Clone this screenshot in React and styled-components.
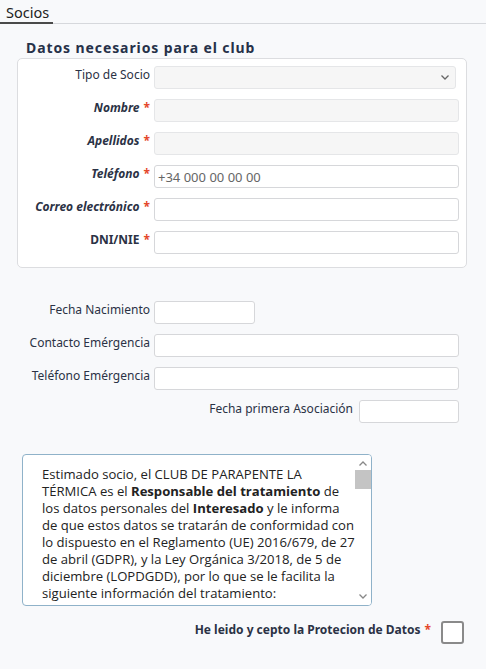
import React from 'react';
import styled, { createGlobalStyle } from 'styled-components';

const Global = createGlobalStyle`
  html, body {
    margin: 0;
    padding: 0;
    background: #f8f9fb;
    font-family: 'Noto Sans', 'Open Sans', sans-serif;
    color: #2b3245;
  }
  * { box-sizing: border-box; }
`;

const Page = styled.div`
  width: 486px;
  min-height: 669px;
`;

const TabBar = styled.div`
  display: flex;
  border-bottom: 1px solid #d6d8dc;
  height: 24px;
`;

const Tab = styled.div`
  padding: 3px 5px 0 6px;
  width: 53px;
  font-size: 14.5px;
  line-height: 19px;
  color: #222;
  border-bottom: 2px solid #4a4a4a;
  margin-bottom: -1px;
`;

const Legend = styled.h3`
  margin: 15px 0 0 26px;
  font-size: 14px;
  font-weight: 700;
  letter-spacing: 0.9px;
  color: #263149;
  line-height: 18px;
`;

const Box = styled.div`
  margin: 1px 19px 0 17px;
  background: #fff;
  border: 1px solid #dcdde0;
  border-radius: 5px;
  padding: 7px 7px 13px 0;
  display: flex;
  flex-direction: column;
  gap: 10px;
`;

const Section = styled.div`
  margin: 33px 27px 0 17px;
  display: flex;
  flex-direction: column;
  gap: 10px;
  padding-left: 1px;
`;

const Row = styled.div`
  display: flex;
  align-items: center;
  justify-content: ${p => (p.$end ? 'flex-end' : 'flex-start')};
  gap: ${p => (p.$end ? '6px' : '4px')};
  height: 23px;
`;

const Label = styled.label`
  width: ${p => (p.$auto ? 'auto' : '132px')};
  text-align: right;
  font-size: 12px;
  color: #2b3245;
  font-weight: ${p => (p.$req ? 700 : 400)};
  font-style: ${p => (p.$italic ? 'italic' : 'normal')};
  white-space: nowrap;
  padding-bottom: 6px;
`;

const Star = styled.span`
  color: #e4472a;
  font-style: normal;
  font-weight: 700;
  margin-left: 4px;
`;

const Input = styled.input`
  height: 23px;
  width: ${p => p.$w || 'auto'};
  flex: ${p => (p.$w ? '0 0 auto' : '1')};
  border: 1px solid ${p => (p.disabled ? '#e5e6e8' : '#d6d7da')};
  border-radius: 3px;
  background: ${p => (p.disabled ? '#f6f6f6' : '#fff')};
  font-family: 'Noto Sans', sans-serif;
  font-size: 13px;
  padding: 0 3px;
  color: #333;
  &::placeholder { color: #666; }
`;

const Select = styled.div`
  flex: 1;
  margin-right: 3px;
  height: 23px;
  border: 1px solid #e5e6e8;
  border-radius: 3px;
  background: #f6f6f6;
  display: flex;
  align-items: center;
  justify-content: flex-end;
  padding-right: 5px;
`;

const Terms = styled.div`
  margin: 31px 0 0 22px;
  width: 350px;
  height: 152px;
  border: 1px solid #8fb2c9;
  border-radius: 4px;
  background: #fff;
  display: flex;
  overflow: hidden;
`;

const TermsText = styled.div`
  flex: 1;
  overflow: hidden;
  white-space: nowrap;
  padding: 11px 0 0 19px;
  font-family: 'Open Sans', 'Noto Sans', sans-serif;
  font-size: 13.1px;
  line-height: 17px;
  color: #222;
  b { font-weight: 700; }
`;

const ScrollTrack = styled.div`
  width: 16px;
  display: flex;
  flex-direction: column;
  align-items: center;
  background: #fff;
  padding: 2px 0;
`;

const ScrollArrow = styled.div`
  height: 13px;
  display: flex;
  align-items: center;
  justify-content: center;
`;

const ScrollThumb = styled.div`
  width: 16px;
  height: 19px;
  background: #c4c4c4;
`;

const ScrollSpace = styled.div`
  flex: 1;
`;

const Accept = styled.div`
  display: flex;
  justify-content: flex-end;
  align-items: center;
  gap: 10px;
  margin: 15px 22px 0 0;
`;

const AcceptLabel = styled.span`
  font-size: 12px;
  font-weight: 700;
  color: #2b3245;
  padding-bottom: 6px;
`;

const Check = styled.div`
  width: 23px;
  height: 23px;
  border: 2px solid #8a8a8a;
  border-radius: 3px;
  background: #fff;
`;

const Chevron = ({ up, color = '#666' }) => (
  <svg width="10" height="7" viewBox="0 0 10 7">
    <path
      d={up ? 'M1.5 5.5 L5 2 L8.5 5.5' : 'M1.5 1.5 L5 5 L8.5 1.5'}
      fill="none"
      stroke={color}
      strokeWidth="1.3"
    />
  </svg>
);

export default function App() {
  return (
    <Page>
      <Global />
      <TabBar>
        <Tab>Socios</Tab>
      </TabBar>
      <Legend>Datos necesarios para el club</Legend>
      <Box>
        <Row>
          <Label>Tipo de Socio</Label>
          <Select><Chevron /></Select>
        </Row>
        <Row>
          <Label $req $italic>Nombre<Star>*</Star></Label>
          <Input disabled />
        </Row>
        <Row>
          <Label $req $italic>Apellidos<Star>*</Star></Label>
          <Input disabled />
        </Row>
        <Row>
          <Label $req $italic>Teléfono<Star>*</Star></Label>
          <Input placeholder="+34 000 00 00 00" />
        </Row>
        <Row>
          <Label $req $italic>Correo electrónico<Star>*</Star></Label>
          <Input />
        </Row>
        <Row>
          <Label $req>DNI/NIE<Star>*</Star></Label>
          <Input />
        </Row>
      </Box>
      <Section>
        <Row>
          <Label>Fecha Nacimiento</Label>
          <Input $w="101px" />
        </Row>
        <Row>
          <Label>Contacto Emérgencia</Label>
          <Input />
        </Row>
        <Row>
          <Label>Teléfono Emérgencia</Label>
          <Input />
        </Row>
        <Row $end>
          <Label $auto>Fecha primera Asociación</Label>
          <Input $w="100px" />
        </Row>
      </Section>
      <Terms>
        <TermsText>
          Estimado socio, el CLUB DE PARAPENTE LA<br />
          TÉRMICA es el <b>Responsable del tratamiento</b> de<br />
          los datos personales del <b>Interesado</b> y le informa<br />
          de que estos datos se tratarán de conformidad con<br />
          lo dispuesto en el Reglamento (UE) 2016/679, de 27<br />
          de abril (GDPR), y la Ley Orgánica 3/2018, de 5 de<br />
          diciembre (LOPDGDD), por lo que se le facilita la<br />
          siguiente información del tratamiento:
        </TermsText>
        <ScrollTrack>
          <ScrollArrow><Chevron up color="#888" /></ScrollArrow>
          <ScrollThumb />
          <ScrollSpace />
          <ScrollArrow><Chevron color="#888" /></ScrollArrow>
        </ScrollTrack>
      </Terms>
      <Accept>
        <AcceptLabel>He leido y cepto la Protecion de Datos<Star>*</Star></AcceptLabel>
        <Check />
      </Accept>
    </Page>
  );
}
